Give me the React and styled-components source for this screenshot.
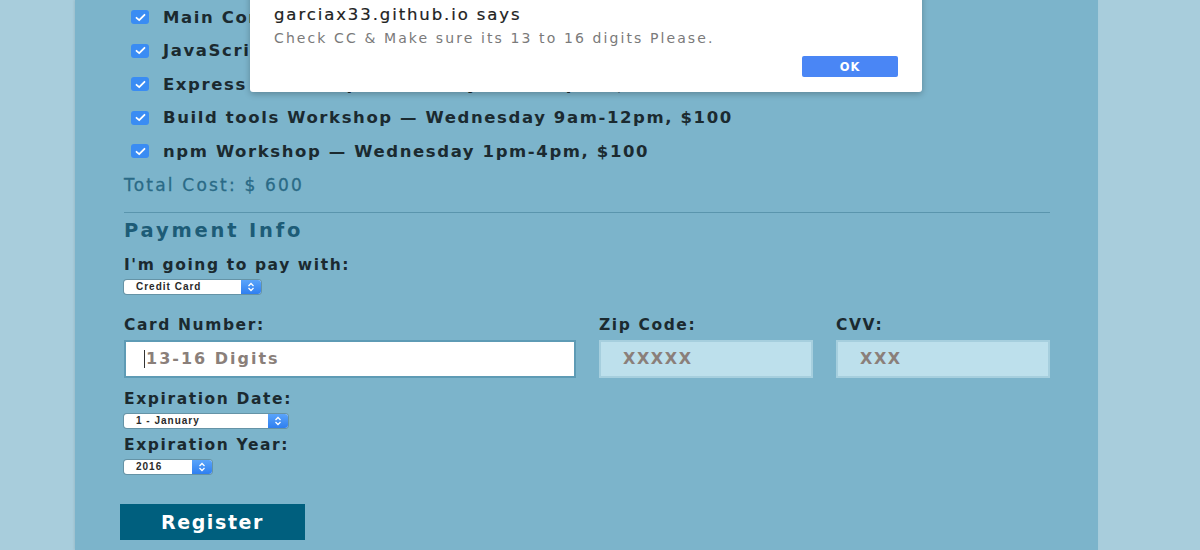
import React from 'react'
import styled, { createGlobalStyle } from 'styled-components'

const Global = createGlobalStyle`
  html, body { margin: 0; padding: 0; }
  body {
    background: #a8cddc;
    font-family: "DejaVu Sans", "Liberation Sans", sans-serif;
    overflow: hidden;
    height: 550px;
  }
`

const Page = styled.div`
  width: 1023px;
  height: 550px;
  margin-left: 75px;
  background: #7cb4cb;
  box-shadow: -1px 0 2px rgba(0, 0, 0, 0.08);
  position: relative;
`

const Form = styled.div`
  padding: 8px 0 0 124px;
  margin-left: -75px;
  width: 926px;
  display: flex;
  flex-direction: column;
`

const Row = styled.label`
  display: flex;
  align-items: center;
  gap: 14px;
  height: 18px;
  margin-bottom: 15.5px;
  padding-left: 7px;
  font-size: 16.5px;
  font-weight: bold;
  letter-spacing: 1.6px;
  color: #1b2a30;
  white-space: nowrap;
`

const Check = styled.span`
  width: 18px;
  height: 14px;
  border-radius: 3px;
  background: #3a8cf3;
  display: flex;
  align-items: center;
  justify-content: center;
`

const Total = styled.div`
  font-size: 17px;
  letter-spacing: 2.2px;
  color: #2a6a86;
  margin-top: -1px;
  -webkit-text-stroke: 0.3px #2a6a86;
`

const Divider = styled.hr`
  border: none;
  border-top: 1px solid #5a95ad;
  margin: 17px 0 6px;
  width: 926px;
`

const Heading = styled.h3`
  margin: 0;
  font-size: 19.5px;
  font-weight: bold;
  letter-spacing: 2.8px;
  color: #1d5c77;
`

const Label = styled.div`
  font-size: 15.5px;
  font-weight: bold;
  letter-spacing: 1.6px;
  color: #1b2a30;
  margin-top: ${p => p.$top || 0}px;
  white-space: nowrap;
`

const Select = styled.div`
  width: ${p => p.$w}px;
  height: 14px;
  margin-top: 6px;
  border-radius: 3px;
  background: #fff;
  box-shadow: 0 0 0 1px rgba(0, 0, 0, 0.18);
  display: flex;
  align-items: center;
  font-size: 10px;
  font-weight: bold;
  letter-spacing: 1px;
  color: #2a2a2a;
  overflow: hidden;
`

const SelectText = styled.span`
  flex: 1;
  padding-left: 12px;
  font-family: "Liberation Sans", sans-serif;
`

const Arrow = styled.span`
  width: 20px;
  height: 14px;
  background: linear-gradient(#5aa4fa, #2f7ff0);
  display: flex;
  align-items: center;
  justify-content: center;
`

const Fields = styled.div`
  display: grid;
  grid-template-columns: 452px 214px 214px;
  column-gap: 23px;
  margin-top: 22px;
`

const Field = styled.div`
  display: flex;
  flex-direction: column;
  gap: 6px;
`

const Input = styled.div`
  height: 38px;
  box-sizing: border-box;
  background: ${p => (p.$focus ? '#fff' : '#bde0ec')};
  border: 2px solid ${p => (p.$focus ? '#5e9bb5' : '#a6cfde')};
  display: flex;
  align-items: center;
  padding-left: ${p => (p.$focus ? 18 : 22)}px;
  font-size: 16px;
  letter-spacing: ${p => (p.$focus ? 2 : 1.6)}px;
  color: #8a7f7a;
  font-weight: bold;
`

const Caret = styled.span`
  width: 1px;
  height: 18px;
  background: #333;
  margin-right: 1px;
`

const Button = styled.button`
  margin: 30px 0 0 -4px;
  width: 185px;
  height: 36px;
  border: none;
  background: #005f7e;
  color: #fff;
  font-family: "DejaVu Sans", sans-serif;
  font-size: 19px;
  font-weight: bold;
  letter-spacing: 1.6px;
`

const Dialog = styled.div`
  position: absolute;
  left: 175px;
  top: -10px;
  width: 672px;
  height: 102px;
  background: #fff;
  box-shadow: 0 2px 6px rgba(0, 0, 0, 0.25);
  border-radius: 0 0 3px 3px;
  box-sizing: border-box;
  padding: 15px 24px 0;
  display: flex;
  flex-direction: column;
`

const DialogTitle = styled.div`
  font-size: 16.5px;
  letter-spacing: 1.9px;
  color: #222;
  -webkit-text-stroke: 0.2px #222;
`

const DialogText = styled.div`
  font-size: 14px;
  letter-spacing: 2.1px;
  color: #7a7a7a;
  margin-top: 6px;
`

const Ok = styled.button`
  align-self: flex-end;
  margin: 10px 0 0;
  width: 96px;
  height: 21px;
  border: none;
  border-radius: 2px;
  background: #4a86f5;
  color: #fff;
  font-family: "DejaVu Sans", sans-serif;
  font-size: 11.5px;
  font-weight: bold;
  letter-spacing: 1px;
`

const Tick = () => (
  <svg width="11" height="9" viewBox="0 0 11 9">
    <path d="M1.5 4.8 L4.2 7.2 L9.5 1.8" stroke="#fff" strokeWidth="1.8" fill="none" strokeLinecap="round" strokeLinejoin="round" />
  </svg>
)

const Chevrons = () => (
  <svg width="8" height="10" viewBox="0 0 8 10">
    <path d="M1.5 4 L4 1.5 L6.5 4 M1.5 6 L4 8.5 L6.5 6" stroke="#fff" strokeWidth="1.3" fill="none" />
  </svg>
)

const activities = [
  'Main Conference — Tuesday, $200',
  'JavaScript Libraries Workshop — Tuesday 1pm-4pm, $100',
  'Express Workshop — Tuesday 9am-12pm, $100',
  'Build tools Workshop — Wednesday 9am-12pm, $100',
  'npm Workshop — Wednesday 1pm-4pm, $100',
]

const App = () => (
  <>
    <Global />
    <Page>
      <Form>
        {activities.map(a => (
          <Row key={a}>
            <Check><Tick /></Check>
            {a}
          </Row>
        ))}
        <Total>Total Cost: $ 600</Total>
        <Divider />
        <Heading>Payment Info</Heading>
        <Label $top={14}>I'm going to pay with:</Label>
        <Select $w={137}>
          <SelectText>Credit Card</SelectText>
          <Arrow><Chevrons /></Arrow>
        </Select>
        <Fields>
          <Field>
            <Label>Card Number:</Label>
            <Input $focus><Caret />13-16 Digits</Input>
          </Field>
          <Field>
            <Label>Zip Code:</Label>
            <Input>XXXXX</Input>
          </Field>
          <Field>
            <Label>CVV:</Label>
            <Input>XXX</Input>
          </Field>
        </Fields>
        <Label $top={12}>Expiration Date:</Label>
        <Select $w={164}>
          <SelectText>1 - January</SelectText>
          <Arrow><Chevrons /></Arrow>
        </Select>
        <Label $top={8}>Expiration Year:</Label>
        <Select $w={88}>
          <SelectText>2016</SelectText>
          <Arrow><Chevrons /></Arrow>
        </Select>
        <Button>Register</Button>
      </Form>
      <Dialog>
        <DialogTitle>garciax33.github.io says</DialogTitle>
        <DialogText>Check CC &amp; Make sure its 13 to 16 digits Please.</DialogText>
        <Ok>OK</Ok>
      </Dialog>
    </Page>
  </>
)

export default App
